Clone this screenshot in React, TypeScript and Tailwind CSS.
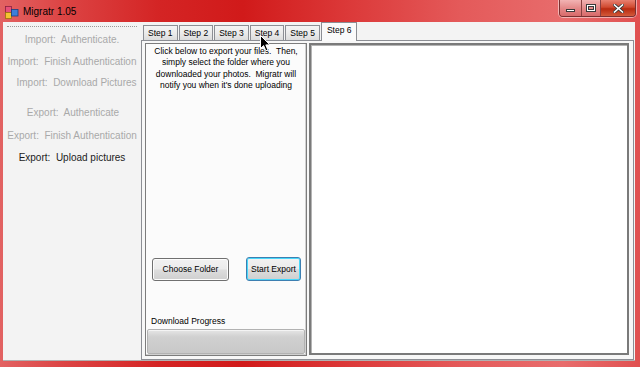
import React from 'react';

const leftSteps = [
  { label: 'Import:  Authenticate.', cls: 'mt-[6px] text-[#a9a9a9]' },
  { label: 'Import:  Finish Authentication', cls: 'mt-[8px] text-[#a9a9a9]' },
  { label: 'Import:  Download Pictures', cls: 'mt-[7px] pl-[9px] text-[#a9a9a9]' },
  { label: 'Export:  Authenticate', cls: 'mt-[16px] pl-[2px] text-[#a9a9a9]' },
  { label: 'Export:  Finish Authentication', cls: 'mt-[9px] text-[#a9a9a9]' },
  { label: 'Export:  Upload pictures', cls: 'mt-[8px] text-[#1b1b1b]' },
];

const tabs = ['Step 1', 'Step 2', 'Step 3', 'Step 4', 'Step 5'];

const AppIcon: React.FC = () => (
  <svg width="14" height="14" viewBox="0 0 14 14" aria-hidden="true">
    <rect x="0.5" y="1.5" width="6" height="6" fill="#e8507a" stroke="#8a2040" strokeWidth="0.8" />
    <rect x="0.5" y="7.5" width="6" height="6" fill="#f4c430" stroke="#9a7010" strokeWidth="0.8" />
    <rect x="6.5" y="4.5" width="6.5" height="6.5" fill="#3d7fd8" stroke="#1a3f80" strokeWidth="0.8" />
  </svg>
);

const Cursor: React.FC = () => (
  <svg className="absolute left-[260px] top-[35px] z-20" width="11" height="17" viewBox="0 0 11 17" aria-hidden="true">
    <path d="M0.5 0.5 L0.5 13.5 L3.6 10.6 L5.8 15.8 L7.9 14.9 L5.8 9.9 L10 9.9 Z" fill="#000" stroke="#fff" strokeWidth="1" strokeLinejoin="round" />
  </svg>
);

const WindowButtons: React.FC = () => (
  <div className="absolute right-[4px] top-0 flex h-[17px] overflow-hidden rounded-b-[4px] border border-t-0 border-[#7a3030] shadow-[0_0_0_1px_rgba(255,255,255,0.5)]">
    <div className="flex w-[22px] items-center justify-center border-r border-[#8a4040] bg-[linear-gradient(180deg,#f2b3b3_0%,#e48a8a_50%,#d86a6a_100%)]">
      <div className="mt-[5px] h-[3px] w-[9px] border border-[#3a3a3a] bg-white" />
    </div>
    <div className="flex w-[19px] items-center justify-center border-r border-[#8a4040] bg-[linear-gradient(180deg,#f2b3b3_0%,#e48a8a_50%,#d86a6a_100%)]">
      <div className="flex h-[8px] w-[10px] items-center justify-center border border-[#3a3a3a] bg-white">
        <div className="h-[4px] w-[6px] border border-[#3a3a3a] bg-[#e48a8a]" />
      </div>
    </div>
    <div className="flex w-[34px] items-center justify-center bg-[linear-gradient(180deg,#e88070_0%,#d04a30_45%,#b82a10_55%,#d25a3a_100%)]">
      <svg width="11" height="9" viewBox="0 0 11 9" aria-hidden="true">
        <path d="M1.5 1 L9.5 8 M9.5 1 L1.5 8" stroke="#3a3a3a" strokeWidth="3.2" strokeLinecap="square" />
        <path d="M1.5 1 L9.5 8 M9.5 1 L1.5 8" stroke="#fff" strokeWidth="1.6" strokeLinecap="square" />
      </svg>
    </div>
  </div>
);

const App: React.FC = () => {
  return (
    <div
      className="relative flex h-[367px] w-[640px] flex-col overflow-hidden bg-[linear-gradient(90deg,#e26262_0%,#dc4444_10%,#d42424_25%,#d11a1a_38%,#dc3a3a_55%,#e45a5a_72%,#e86c6c_88%,#e05050_100%)] text-[8.5px] text-black"
      style={{ fontFamily: '"Liberation Sans", Arial, sans-serif' }}
    >
      {/* title bar */}
      <div className="flex h-[22px] items-center pl-[5px] pt-[1px]">
        <AppIcon />
        <span className="ml-[4px] text-[10px] text-black">Migratr 1.05</span>
      </div>
      <WindowButtons />

      {/* client area */}
      <div className="mb-[6px] ml-[3px] mr-[5px] flex flex-1 border-b border-[#b0b0b0] bg-[#f3f3f3]">
        {/* left steps */}
        <div className="flex w-[138px] flex-col text-[10px]">
          <div className="mx-[4px] mt-[4px] border-t border-dotted border-[#9a9a9a]" />
          {leftSteps.map((s) => (
            <div key={s.label} className={`whitespace-pre text-center leading-[14px] ${s.cls}`}>
              {s.label}
            </div>
          ))}
        </div>

        {/* tab control */}
        <div className="mr-px flex flex-1 flex-col">
          <div className="flex h-[18px] items-end gap-[1px] pl-[2px]">
            {tabs.map((t) => (
              <div
                key={t}
                className="flex h-[15px] items-center border border-b-0 border-[#8c8e94] bg-[linear-gradient(180deg,#f4f4f4_0%,#ebebeb_50%,#dcdcdc_100%)] px-[4px] leading-none"
              >
                {t}
              </div>
            ))}
            <div className="relative z-10 -mb-px flex h-[19px] items-start border border-b-0 border-[#8c8e94] bg-[#fafafa] px-[5px] pt-[3px] leading-none">
              Step 6
            </div>
          </div>

          <div className="flex flex-1 gap-[2px] border border-[#8c8e94] bg-[#f7f7f7] pb-[3px] pl-[3px] pr-[4px] pt-[2px]">
            {/* left box */}
            <div className="flex w-[162px] flex-col border border-[#7c7c7c] bg-[#fbfbfb] shadow-[inset_-1px_-1px_0_#d0d0d0]">
              <p className="mt-[2px] px-[3px] text-center leading-[11.3px]">
                Click below to export your files.&nbsp; Then, simply select the folder where you downloaded your photos.&nbsp; Migratr will notify you when it's done uploading
              </p>
              <div className="mt-auto flex items-center pl-[6px]">
                <button className="h-[23px] w-[77px] rounded-[3px] border border-[#707070] bg-[linear-gradient(180deg,#f2f2f2_0%,#ebebeb_48%,#dddddd_52%,#cfcfcf_100%)] text-[8.5px] shadow-[inset_0_0_0_1px_#fcfcfc]">
                  Choose Folder
                </button>
                <button className="ml-[17px] h-[24px] w-[55px] rounded-[3px] border border-[#3c7fb1] bg-[linear-gradient(180deg,#f2f2f2_0%,#ebebeb_48%,#dddddd_52%,#cfcfcf_100%)] text-[8.5px] shadow-[inset_0_0_0_1px_#48d8fb]">
                  Start Export
                </button>
              </div>
              <div className="mb-[2px] mt-[34px] pl-[5px] leading-[12px]">Download Progress</div>
              <div className="mx-px mb-px h-[25px] rounded-[2px] border border-[#b2b2b2] bg-[linear-gradient(180deg,#e6e6e6_0%,#d0d0d0_30%,#c8c8c8_100%)] shadow-[inset_0_1px_0_#f4f4f4]" />
            </div>

            {/* right box */}
            <div className="mb-px flex-1 border-2 border-[#7a7a7a] bg-white shadow-[inset_1px_1px_0_#b4b4b4]" />
          </div>
        </div>
      </div>

      <Cursor />
    </div>
  );
};

export default App;
